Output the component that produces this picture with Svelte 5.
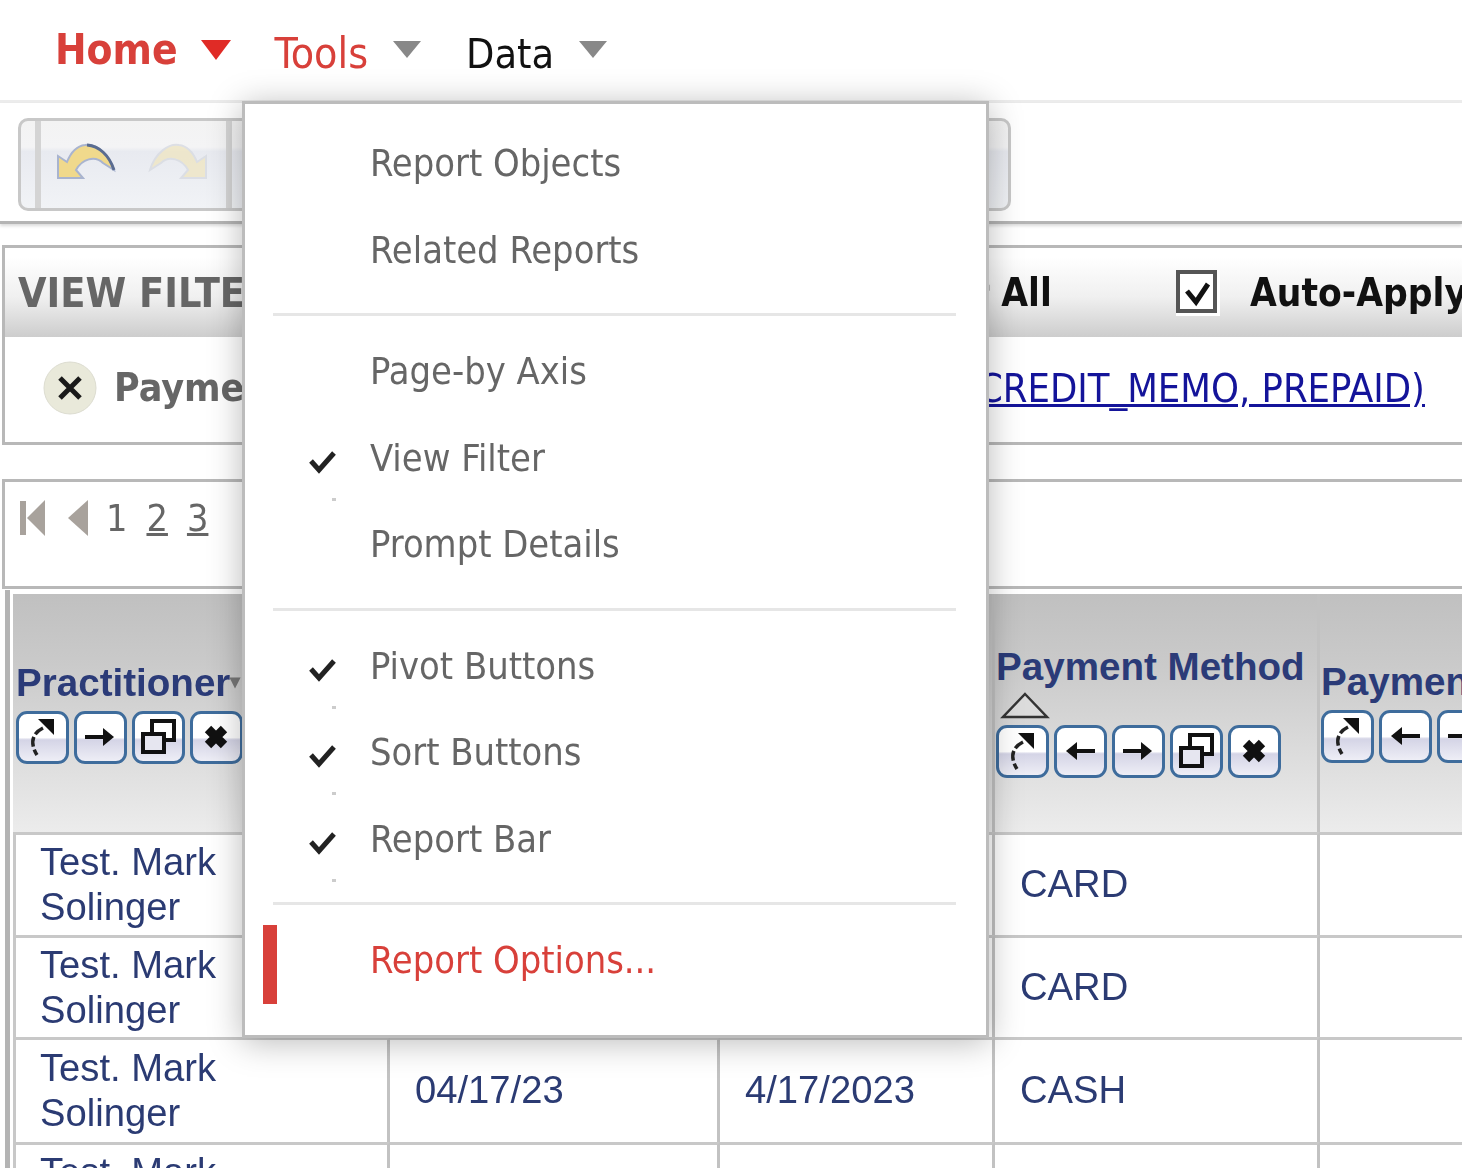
<script lang="ts">
    const menuGroups = [
        [
            { label: 'Report Objects', checked: false },
            { label: 'Related Reports', checked: false },
        ],
        [
            { label: 'Page-by Axis', checked: false },
            { label: 'View Filter', checked: true },
            { label: 'Prompt Details', checked: false },
        ],
        [
            { label: 'Pivot Buttons', checked: true },
            { label: 'Sort Buttons', checked: true },
            { label: 'Report Bar', checked: true },
        ],
    ];

    const rows = [
        { date: '04/17/23', posted: '4/17/2023', method: 'CARD', height: 103 },
        { date: '04/17/23', posted: '4/17/2023', method: 'CARD', height: 102 },
        { date: '04/17/23', posted: '4/17/2023', method: 'CASH', height: 105 },
        { date: '04/17/23', posted: '4/17/2023', method: 'CASH', height: 103 },
    ];
</script>

{#snippet pivotBtn(kind: string)}
    <span class="pivot-btn">
        <svg viewBox="0 0 46 46" width="46" height="46">
            {#if kind === 'pivot'}
                <path d="M19 5 L35 5 L35 21 Z" fill="#111" />
                <path d="M24 14 C14 19 10 28 18 41" fill="none" stroke="#222" stroke-width="3.5" stroke-dasharray="10 3" />
            {:else if kind === 'left'}
                <path d="M38 23 H16" stroke="#111" stroke-width="4" />
                <path d="M9 23 L20 14 V32 Z" fill="#111" />
            {:else if kind === 'right'}
                <path d="M8 23 H30" stroke="#111" stroke-width="4" />
                <path d="M37 23 L26 14 V32 Z" fill="#111" />
            {:else if kind === 'window'}
                <rect x="17" y="7" width="22" height="19" fill="none" stroke="#111" stroke-width="4" />
                <rect x="8" y="20" width="21" height="18" fill="#e6e6f0" stroke="#111" stroke-width="4" />
            {:else}
                <path d="M15 15 L31 31 M31 15 L15 31" stroke="#111" stroke-width="9" />
            {/if}
        </svg>
    </span>
{/snippet}

<div class="page">
    <nav class="topnav">
        <span class="nav-item home">Home</span>
        <span class="caret caret-red"></span>
        <span class="nav-item tools">Tools</span>
        <span class="caret"></span>
        <span class="nav-item data">Data</span>
        <span class="caret"></span>
    </nav>

    <div class="toolbar-band">
        <div class="toolbar">
            <span class="grip"></span>
            <svg class="undo" viewBox="0 0 60 38" width="60" height="38">
                <path d="M1 13 L1 35 L26 35 L19 27 C25 16 38 12 46 20 L57 27 C52 10 38 0 28 2 C20 3 14 9 10 19 Z" fill="#f0d98c" stroke="#a9b4cf" stroke-width="2" />
                <path d="M30 2 C42 3 52 12 57 27" fill="none" stroke="#5a6c90" stroke-width="3" />
            </svg>
            <svg class="redo" viewBox="0 0 60 38" width="60" height="38">
                <path d="M59 13 L59 35 L34 35 L41 27 C35 16 22 12 14 20 L3 27 C8 10 22 0 32 2 C40 3 46 9 50 19 Z" fill="#efe6c4" stroke="#d8dbe2" stroke-width="2" />
            </svg>
            <span class="grip grip-right"></span>
        </div>
    </div>

    <section class="filter-panel">
        <header class="filter-head">
            <span class="filter-title">VIEW FILTER</span>
            <span class="clear-all">Clear All</span>
            <span class="auto-check">
                <svg viewBox="0 0 44 46" width="44" height="46">
                    <rect x="0" y="0" width="44" height="46" fill="#fff" />
                    <rect x="2" y="2" width="37" height="39" fill="#fff" stroke="#555" stroke-width="4" />
                    <path d="M11 21 L20 32 L32 14" fill="none" stroke="#111" stroke-width="5" />
                </svg>
            </span>
            <span class="auto-apply">Auto-Apply</span>
        </header>
        <div class="filter-body">
            <span class="clear-x">
                <svg viewBox="0 0 54 54" width="54" height="54">
                    <circle cx="27" cy="27" r="26" fill="#e9e9da" stroke="#dcdcd0" stroke-width="1" />
                    <path d="M17 17 L37 37 M37 17 L17 37" stroke="#1a1a1a" stroke-width="5" />
                </svg>
            </span>
            <strong class="filter-name">Payment Method In List</strong>
            <a class="filter-link" href="#filter">(CASH, CARD, CREDIT_MEMO, PREPAID)</a>
        </div>
    </section>

    <section class="pager-panel">
        <svg viewBox="0 0 26 36" width="26" height="36" class="pg-first">
            <rect x="0" y="1" width="6" height="34" fill="#a8a29c" />
            <path d="M25 0 V36 L7 18 Z" fill="#a8a29c" />
        </svg>
        <svg viewBox="0 0 22 36" width="22" height="36" class="pg-prev">
            <path d="M21 0 V36 L1 18 Z" fill="#a8a29c" />
        </svg>
        <span class="pg-num">1</span>
        <a class="pg-num" href="#p2">2</a>
        <a class="pg-num" href="#p3">3</a>
    </section>

    <div class="table-wrap">
        <div class="grid">
            <div class="th">
                <span class="th-label">Practitioner<i class="sort-mark">▾</i></span>
                <div class="btns">
                    {@render pivotBtn('pivot')}
                    {@render pivotBtn('right')}
                    {@render pivotBtn('window')}
                    {@render pivotBtn('close')}
                </div>
            </div>
            <div class="th"><span class="th-label">Date</span></div>
            <div class="th"><span class="th-label">Posted</span></div>
            <div class="th th-tight">
                <span class="th-label">Payment Method</span>
                <svg class="sort-up" viewBox="0 0 50 28" width="50" height="28">
                    <path d="M25 2 L47 25 H3 Z" fill="#dcdcdc" stroke="#333" stroke-width="2.5" />
                </svg>
                <div class="btns">
                    {@render pivotBtn('pivot')}
                    {@render pivotBtn('left')}
                    {@render pivotBtn('right')}
                    {@render pivotBtn('window')}
                    {@render pivotBtn('close')}
                </div>
            </div>
            <div class="th th-tight">
                <span class="th-label">Payment Reference</span>
                <div class="btns">
                    {@render pivotBtn('pivot')}
                    {@render pivotBtn('left')}
                    {@render pivotBtn('right')}
                    {@render pivotBtn('window')}
                    {@render pivotBtn('close')}
                </div>
            </div>

            {#each rows as row}
                <div class="td name" style="height: {row.height}px">Test. Mark Solinger</div>
                <div class="td" style="height: {row.height}px">{row.date}</div>
                <div class="td" style="height: {row.height}px">{row.posted}</div>
                <div class="td" style="height: {row.height}px">{row.method}</div>
                <div class="td" style="height: {row.height}px"></div>
            {/each}
        </div>
    </div>

    <div class="menu">
        {#each menuGroups as group}
            {#each group as item}
                <div class="menu-item">
                    {#if item.checked}
                        <svg class="check" viewBox="0 0 30 28" width="30" height="28">
                            <path d="M3 13 L11 22 L26 5" fill="none" stroke="#222" stroke-width="5" />
                        </svg>
                        <span class="check-dot"></span>
                    {/if}
                    {item.label}
                </div>
            {/each}
            <hr class="menu-sep" />
        {/each}
        <div class="menu-item active">
            <span class="active-bar"></span>
            Report Options...
        </div>
    </div>
</div>

<style>
    :global(body) {
        margin: 0;
        background: #fff;
    }

    .page {
        position: relative;
        width: 1462px;
        height: 1168px;
        overflow: hidden;
        font-family: "DejaVu Sans Condensed", "DejaVu Sans", sans-serif;
        color: #666;
        filter: blur(0.4px);
    }

    .topnav {
        display: flex;
        align-items: center;
        box-sizing: border-box;
        height: 103px;
        padding: 0 0 0 55px;
        border-bottom: 3px solid #ececec;
    }
    .nav-item {
        font-size: 42px;
        line-height: 1;
    }
    .home {
        font-weight: 700;
        color: #d8403a;
    }
    .tools {
        color: #d8403a;
        font-size: 42.5px;
        margin-left: 44px;
        margin-top: 8px;
    }
    .data {
        color: #111;
        font-size: 41px;
        margin-left: 45px;
        margin-top: 8px;
    }
    .caret {
        width: 0;
        height: 0;
        margin: -2px 0 0 25px;
        border-left: 14px solid transparent;
        border-right: 14px solid transparent;
        border-top: 17px solid #888;
    }
    .caret-red {
        margin-left: 23px;
        margin-top: 0;
        border-left-width: 15px;
        border-right-width: 15px;
        border-top: 20px solid #e02b26;
    }

    .toolbar-band {
        box-sizing: border-box;
        height: 121px;
        padding: 15px 0 0 18px;
        border-bottom: 3px solid #b4b4b4;
        box-shadow: 0 2px 3px rgba(0, 0, 0, 0.15);
    }
    .toolbar {
        display: flex;
        align-items: center;
        box-sizing: border-box;
        width: 993px;
        height: 93px;
        padding-left: 14px;
        border: 3px solid #c8c8c8;
        border-radius: 10px;
        background: linear-gradient(#f3f3f3 0%, #f4f4f5 30%, #e8eaf0 35%, #f1f3f6 100%);
    }
    .grip {
        align-self: stretch;
        width: 6px;
        background: #d4d4d4;
    }
    .undo {
        margin: -6px 0 0 16px;
    }
    .redo {
        margin: -6px 0 0 30px;
        opacity: 0.8;
    }
    .grip-right {
        margin-left: 19px;
    }

    .filter-panel {
        box-sizing: border-box;
        height: 200px;
        margin: 21px 0 0 2px;
        border: solid #b8b8b8;
        border-width: 3px 0 3px 3px;
    }
    .filter-head {
        display: flex;
        align-items: center;
        box-sizing: border-box;
        height: 89px;
        padding-left: 13px;
        background: linear-gradient(#fff 10%, #f0f0f0 55%, #cdcdcd 100%);
        font-weight: 700;
        font-size: 38.5px;
        white-space: nowrap;
        color: #111;
    }
    .filter-head > span {
        flex: none;
    }
    .filter-title {
        width: 870px;
        font-size: 41px;
        color: #666;
    }
    .clear-all {
        width: 288px;
    }
    .auto-check {
        display: flex;
        width: 74px;
    }
    .filter-body {
        display: flex;
        align-items: center;
        box-sizing: border-box;
        height: 105px;
        padding: 0 0 4px 38px;
        font-size: 39px;
        white-space: nowrap;
    }
    .clear-x {
        display: flex;
    }
    .filter-name {
        margin-left: 17px;
    }
    .filter-link {
        margin: 0 37px 0 auto;
        font-size: 39.5px;
        color: #14149a;
    }

    .pager-panel {
        display: flex;
        align-items: center;
        box-sizing: border-box;
        height: 110px;
        margin: 34px 0 0 2px;
        padding: 0 0 32px 15px;
        border: solid #b8b8b8;
        border-width: 3px 0 3px 3px;
        font-size: 37.5px;
    }
    .pg-prev {
        margin-left: 21px;
    }
    .pg-num {
        margin-left: 19px;
        color: #666;
    }
    .pg-prev + .pg-num {
        margin-left: 17px;
    }

    .table-wrap {
        margin: 1px 0 0 5px;
        padding: 4px 0 0 3px;
        border-left: 5px solid #b4b4b4;
    }
    .grid {
        display: grid;
        grid-template-columns: 377px 330px 275px 325px 400px;
        font-family: "Liberation Sans", Arial, sans-serif;
        font-size: 38.2px;
    }
    .th {
        display: flex;
        flex-direction: column;
        justify-content: center;
        align-items: flex-start;
        box-sizing: border-box;
        height: 238px;
        padding: 0 0 4px 3px;
        border-right: 3px solid #c2c2c2;
        background: linear-gradient(#c0c0c0, #cacaca 30%, #ececec 100%);
    }
    .th-tight {
        padding-left: 1px;
    }
    .th-label {
        font-weight: 700;
        font-size: 38.6px;
        color: #2b3b78;
        line-height: 44px;
        white-space: nowrap;
    }
    .sort-mark {
        font-size: 20px;
        font-style: normal;
        color: #777;
        vertical-align: 8px;
    }
    .sort-up {
        margin: 3px 0 3px 4px;
    }
    .btns {
        display: flex;
        gap: 5px;
        margin-top: 6px;
    }
    .sort-up + .btns {
        margin-top: 2px;
    }
    .pivot-btn {
        display: flex;
        box-sizing: border-box;
        width: 53px;
        height: 53px;
        padding: 1px;
        border: 3px solid #3e6c9c;
        border-radius: 11px;
        background: linear-gradient(#fff 50%, #d4d4e6 55%, #eeeef6 100%);
    }
    .pivot-btn svg {
        margin: -1px;
    }
    .td {
        display: flex;
        align-items: center;
        box-sizing: border-box;
        padding: 0 0 3px 25px;
        border-right: 3px solid #c2c2c2;
        border-top: 3px solid #c8c8c8;
        color: #2b3b73;
        line-height: 45px;
    }
    .name {
        padding: 0 150px 2px 24px;
        border-left: 3px solid #c8c8c8;
    }

    .menu {
        position: absolute;
        top: 101px;
        left: 242px;
        box-sizing: border-box;
        width: 747px;
        height: 937px;
        padding: 16px 30px 0 28px;
        border: 3px solid #bcbcbc;
        background: #fff;
        box-shadow: 0 4px 32px rgba(0, 0, 0, 0.28);
        font-size: 37.7px;
    }
    .menu-item {
        position: relative;
        height: 86.5px;
        line-height: 86px;
        padding-left: 97px;
        color: #666;
        white-space: nowrap;
    }
    .menu-sep {
        height: 3px;
        margin: 20px 0 12px;
        border: none;
        background: #e6e6e6;
    }
    .check {
        position: absolute;
        top: 33px;
        left: 35px;
    }
    .check-dot {
        position: absolute;
        top: 83px;
        left: 59px;
        width: 4px;
        height: 3px;
        background: #ccc;
    }
    .active {
        color: #d8403a;
    }
    .active-bar {
        position: absolute;
        top: 8px;
        left: -10px;
        width: 14px;
        height: 79px;
        background: #d8403a;
    }
</style>
